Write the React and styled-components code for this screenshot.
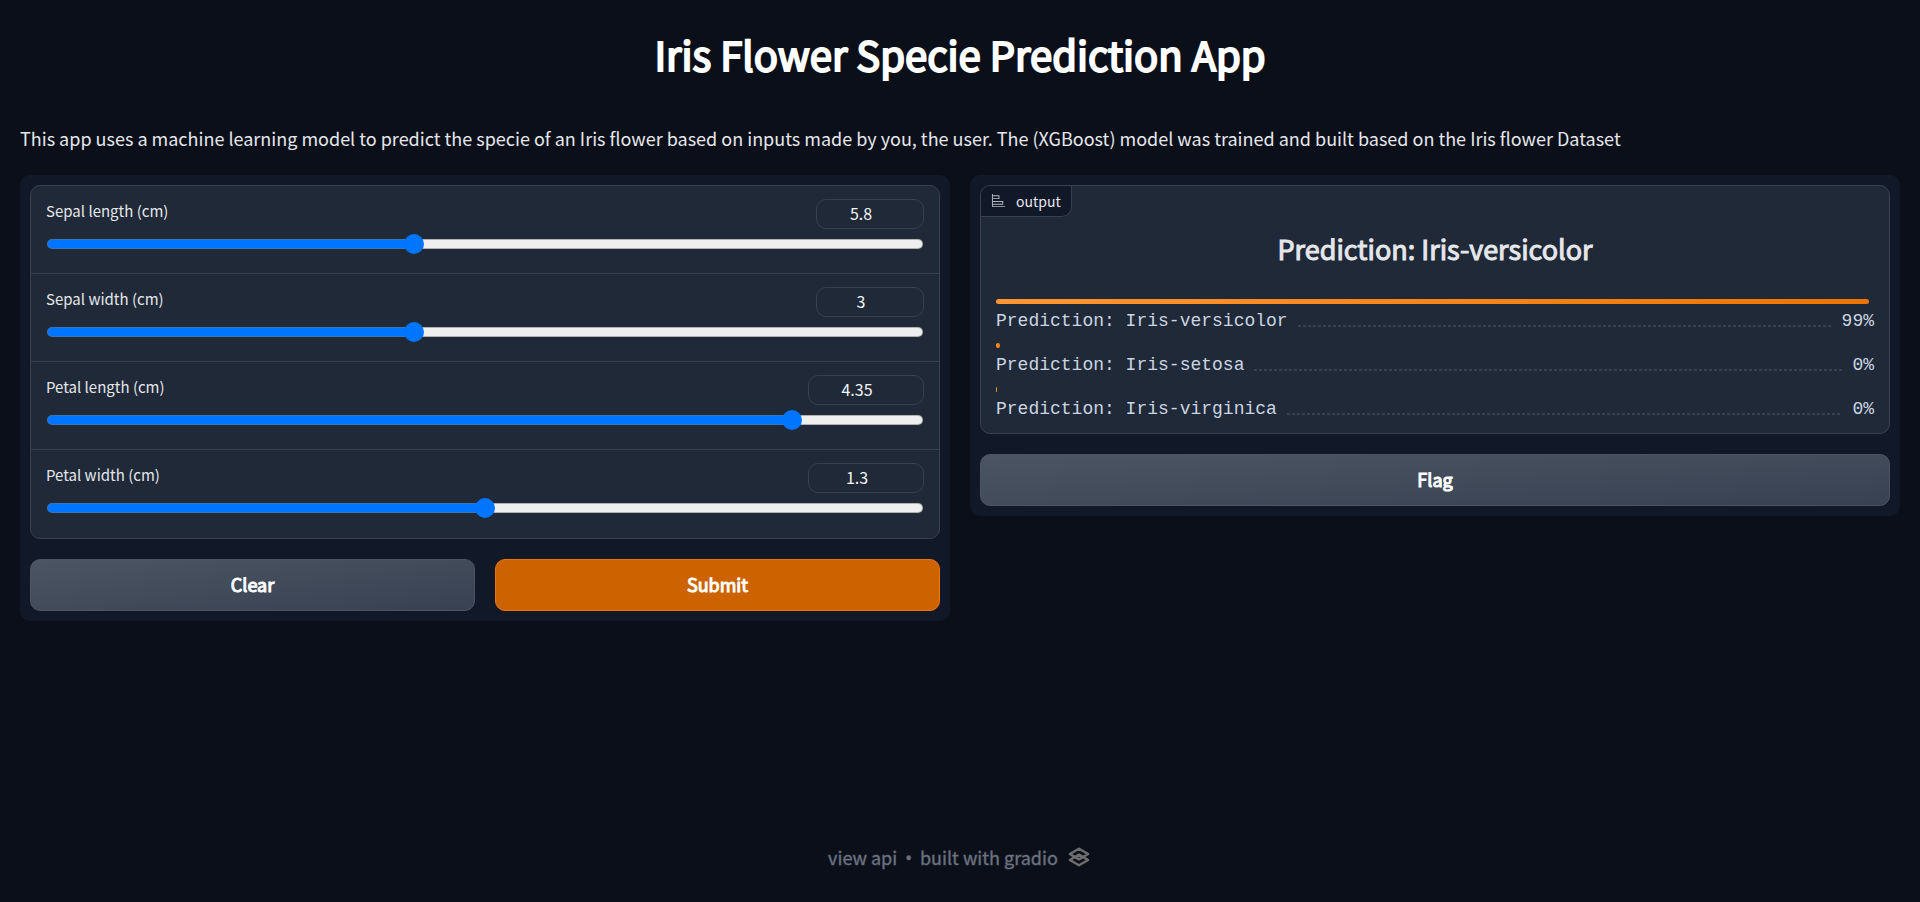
import React, { useState } from "react";
import styled, { createGlobalStyle } from "styled-components";

const GlobalStyle = createGlobalStyle`
  *, *::before, *::after { box-sizing: border-box; }
  body {
    margin: 0;
    background: #0b0f19;
    color: #f3f4f6;
    font-family: "Noto Sans CJK SC", "Noto Sans", sans-serif;
    font-size: 18px;
    line-height: 30px;
  }
  h1, h2, p, dl, dt, dd { margin: 0; }
  button, input { font-family: inherit; }
`;

const Page = styled.div`
  display: flex;
  flex-direction: column;
  min-height: 100vh;
  padding: 20px;
`;

const Main = styled.main`
  flex: 1;
`;

const Title = styled.h1`
  margin-top: 6px;
  color: #ffffff;
  font-size: 40px;
  line-height: 57px;
  font-weight: 400;
  -webkit-text-stroke: 2px #ffffff;
  text-align: center;
`;

const Description = styled.p`
  margin-top: 38px;
  color: #e5e7eb;
  line-height: 34px;
`;

const Columns = styled.div`
  display: grid;
  grid-template-columns: 1fr 1fr;
  align-items: start;
  gap: 20px;
  margin-top: 20px;
`;

const Panel = styled.section`
  display: flex;
  flex-direction: column;
  gap: 20px;
  padding: 10px;
  border-radius: 10px;
  background: #111827;
`;

const Form = styled.form`
  overflow: hidden;
  border: 1px solid #374151;
  border-radius: 10px;
  background: #1f2937;
`;

const Field = styled.div`
  height: 88px;
  padding: 13px 15px 0;

  &:not(:last-child) {
    border-bottom: 1px solid #374151;
  }
`;

const FieldHead = styled.div`
  display: flex;
  justify-content: space-between;
  height: 30px;
`;

const FieldLabel = styled.label`
  color: #e5e7eb;
  font-size: 15px;
  line-height: 24px;
`;

const NumberBox = styled.input`
  width: ${(p) => (p.$wide ? 116 : 108)}px;
  height: 30px;
  padding: 0 18px 2px 0;
  border: 1px solid #374151;
  border-radius: 10px;
  outline: none;
  background: #1f2937;
  color: #f3f4f6;
  font-size: 16px;
  line-height: 26px;
  text-align: center;
  appearance: textfield;

  &::-webkit-inner-spin-button,
  &::-webkit-outer-spin-button {
    appearance: none;
    margin: 0;
  }
`;

const Slider = styled.input`
  display: block;
  width: calc(100% - 2px);
  height: 20px;
  margin: 5px 1px 0;
  appearance: none;
  background: transparent;
  cursor: pointer;

  &::-webkit-slider-runnable-track {
    height: 10px;
    border: 1px solid rgba(118, 118, 118, 0.5);
    border-radius: 5px;
    background: linear-gradient(#0075ff, #0075ff) left / var(--fill) 100% no-repeat #efefef;
    background-origin: border-box;
  }

  &::-webkit-slider-thumb {
    width: 20px;
    height: 20px;
    margin-top: -6px;
    appearance: none;
    border-radius: 50%;
    background: #0075ff;
  }
`;

const Actions = styled.div`
  display: grid;
  grid-auto-flow: column;
  grid-auto-columns: 1fr;
  gap: 20px;
`;

const Button = styled.button`
  height: 52px;
  padding: 0 0 2px;
  border: 1px solid ${(p) => (p.$primary ? "#ee7400" : "#4b5563")};
  border-radius: 10px;
  background: ${(p) =>
    p.$primary ? "#cc6300" : "linear-gradient(to bottom right, #4b5563, #374151)"};
  background-origin: border-box;
  color: #ffffff;
  font-size: 18px;
  line-height: 30px;
  font-weight: 400;
  -webkit-text-stroke: 1px #ffffff;
  cursor: pointer;
`;

const Output = styled.div`
  position: relative;
  padding: 32px 15px 12px;
  border: 1px solid #374151;
  border-radius: 10px;
  background: #1f2937;
`;

const OutputTag = styled.div`
  position: absolute;
  top: 0;
  left: 0;
  display: flex;
  align-items: center;
  gap: 10px;
  height: 31px;
  padding: 0 10px 1px;
  border: solid #374151;
  border-width: 0 1px 1px 0;
  border-radius: 9px 0 10px 0;
  background: #111827;
  color: #e5e7eb;
  font-size: 14px;
`;

const Winner = styled.h2`
  color: #e5e7eb;
  font-size: 27px;
  line-height: 62px;
  font-weight: 400;
  -webkit-text-stroke: 1px #e5e7eb;
  text-align: center;
`;

const Scores = styled.dl`
  display: grid;
  gap: 10px;
  padding-top: 19px;
  color: #cbd5e1;
  font-family: "Liberation Mono", "DejaVu Sans Mono", monospace;
  font-size: 18px;
  line-height: 24px;
`;

const Bar = styled.div`
  width: var(--width);
  height: 5px;
  margin-bottom: 5px;
  border-radius: 4px;
  background: linear-gradient(to right, #ff9633, #ee7400);
`;

const Score = styled.div`
  display: flex;
  align-items: center;
  gap: 10px;
  height: 24px;
`;

const Leader = styled.span`
  flex: 1;
  height: 2px;
  margin-top: 9px;
  background: repeating-linear-gradient(to right, #374151 0 3px, transparent 3px 5px);
`;

const Footer = styled.footer`
  display: flex;
  justify-content: center;
  gap: 8px;
  padding-bottom: 10px;
  color: #6b7280;
  -webkit-text-stroke: 1px rgba(107, 114, 128, 0.4);
`;

const Bullet = styled.span`
  font-family: "Noto Sans", sans-serif;
`;

const FooterLink = styled.a`
  display: flex;
  align-items: center;
  gap: 8px;
  color: inherit;
  text-decoration: none;
`;

const ChartIcon = () => (
  <svg width="15" height="15" viewBox="0 0 32 32" fill="#b4b8bf" aria-hidden="true">
    <path d="M4 2H2v26a2 2 0 0 0 2 2h26v-2H4v-3h22v-8H4v-4h14V5H4Zm20 17v4H4v-4ZM16 7v4H4V7Z" />
  </svg>
);

const GradioIcon = () => (
  <svg width="26" height="26" viewBox="0 0 576 576" fill="none" stroke="#6e6e6e" strokeWidth="56" strokeLinejoin="round" aria-hidden="true">
    <path d="M288 237L86 354L288 471L490 354Z" />
    <path d="M288 105L86 222L288 339L490 222Z" />
  </svg>
);

const FIELDS = [
  { id: "sepal-length", label: "Sepal length (cm)", min: 4.3, max: 7.9, step: 0.1, value: 5.8 },
  { id: "sepal-width", label: "Sepal width (cm)", min: 2, max: 4.4, step: 0.1, value: 3 },
  { id: "petal-length", label: "Petal length (cm)", min: 1, max: 4.9, step: 0.05, value: 4.35, wide: true },
  { id: "petal-width", label: "Petal width (cm)", min: 0.1, max: 2.5, step: 0.1, value: 1.3, wide: true },
];

const SCORES = [
  { name: "Prediction: Iris-versicolor", percent: "99%", width: "calc(99.5% - 1px)" },
  { name: "Prediction: Iris-setosa", percent: "0%", width: "4px" },
  { name: "Prediction: Iris-virginica", percent: "0%", width: "1px" },
];

function Measurement({ id, label, min, max, step, value: initial, wide }) {
  const [value, setValue] = useState(initial);
  const fraction = (value - min) / (max - min);
  const change = (e) => setValue(e.target.value);
  return (
    <Field>
      <FieldHead>
        <FieldLabel htmlFor={id}>{label}</FieldLabel>
        <NumberBox
          id={id}
          type="number"
          $wide={wide}
          min={min}
          max={max}
          step={step}
          value={value}
          onChange={change}
        />
      </FieldHead>
      <Slider
        type="range"
        aria-label={label}
        min={min}
        max={max}
        step={step}
        value={value}
        onChange={change}
        style={{ "--fill": `calc(10px + (100% - 20px) * ${fraction})` }}
      />
    </Field>
  );
}

export default function App() {
  return (
    <Page>
      <GlobalStyle />
      <Main>
        <Title>Iris Flower Specie Prediction App</Title>
        <Description>
          This app uses a machine learning model to predict the specie of an Iris flower based on
          inputs made by you, the user. The (XGBoost) model was trained and built based on the Iris
          flower Dataset
        </Description>
        <Columns>
          <Panel>
            <Form>
              {FIELDS.map((field) => (
                <Measurement key={field.id} {...field} />
              ))}
            </Form>
            <Actions>
              <Button type="button">Clear</Button>
              <Button type="button" $primary>
                Submit
              </Button>
            </Actions>
          </Panel>
          <Panel>
            <Output>
              <OutputTag>
                <ChartIcon />
                output
              </OutputTag>
              <Winner>Prediction: Iris-versicolor</Winner>
              <Scores>
                {SCORES.map((s) => (
                  <div key={s.name}>
                    <Bar style={{ "--width": s.width }} />
                    <Score>
                      <dt>{s.name}</dt>
                      <Leader />
                      <dd>{s.percent}</dd>
                    </Score>
                  </div>
                ))}
              </Scores>
            </Output>
            <Button type="button">Flag</Button>
          </Panel>
        </Columns>
      </Main>
      <Footer>
        <FooterLink href="#api">view api</FooterLink>
        <Bullet>•</Bullet>
        <FooterLink href="#gradio">
          built with gradio
          <GradioIcon />
        </FooterLink>
      </Footer>
    </Page>
  );
}
